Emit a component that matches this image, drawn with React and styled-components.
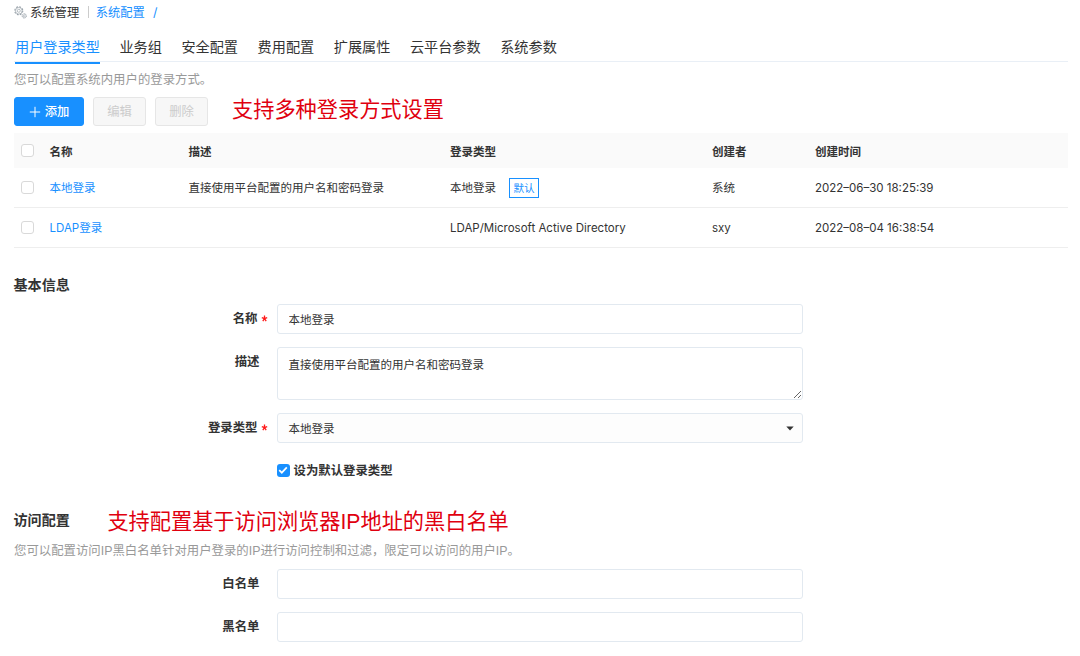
import { useState } from "react";
import styled, { createGlobalStyle } from "styled-components";

const tabs = ["用户登录类型", "业务组", "安全配置", "费用配置", "扩展属性", "云平台参数", "系统参数"];

const filas = [
  {
    id: 1,
    nombre: "本地登录",
    descripcion: "直接使用平台配置的用户名和密码登录",
    tipo: "本地登录",
    porDefecto: true,
    creador: "系统",
    fecha: "2022–06–30 18:25:39",
  },
  {
    id: 2,
    nombre: "LDAP登录",
    descripcion: "",
    tipo: "LDAP/Microsoft Active Directory",
    porDefecto: false,
    creador: "sxy",
    fecha: "2022–08–04 16:38:54",
  },
];

function IconoEngranajes() {
  return (
    <svg width="13" height="13" viewBox="0 0 13 13" fill="none" stroke="#9aa3ab">
      <circle cx="4.8" cy="4.8" r="4" strokeWidth="1.1" strokeDasharray="1.8 1.34" />
      <circle cx="4.8" cy="4.8" r="3.3" strokeWidth="0.7" />
      <circle cx="4.8" cy="4.8" r="1.5" strokeWidth="0.7" />
      <circle cx="10.3" cy="9.9" r="2.1" strokeWidth="1" strokeDasharray="1.2 0.45" />
      <circle cx="10.3" cy="9.9" r="1" strokeWidth="0.6" />
    </svg>
  );
}

function Check({ marcado }) {
  return (
    <Caja $marcado={marcado}>
      {marcado && (
        <svg width="12" height="12" viewBox="0 0 12 12" fill="none" stroke="#fff" strokeWidth="1.7">
          <path d="M2.2 6.1 L4.8 8.7 L9.8 3.4" />
        </svg>
      )}
    </Caja>
  );
}

export default function App() {
  const [activa, setActiva] = useState(0);
  return (
    <>
      <GlobalStyle />
      <Container>
        <Ruta>
          <IconoEngranajes />
          <span className="modulo">系统管理</span>
          <span className="separador" />
          <span className="actual">系统配置</span>
          <span className="barra">/</span>
        </Ruta>
        <Tabs>
          {tabs.map((t, i) => (
            <Tab key={t} $activa={i === activa} onClick={() => setActiva(i)}>
              {t}
            </Tab>
          ))}
        </Tabs>
        <Ayuda>您可以配置系统内用户的登录方式。</Ayuda>
        <Acciones>
          <BotonPrimario>
            <svg width="12" height="12" viewBox="0 0 12 12" stroke="#fff" strokeWidth="1">
              <path d="M6 0.8 V11.2 M0.8 6 H11.2" />
            </svg>
            添加
          </BotonPrimario>
          <Boton disabled>编辑</Boton>
          <Boton disabled>删除</Boton>
          <Nota $izq={15} $abajo={4}>支持多种登录方式设置</Nota>
        </Acciones>
        <Tabla>
          <Cabecera>
            <Check />
            <span>名称</span>
            <span>描述</span>
            <span>登录类型</span>
            <span>创建者</span>
            <span>创建时间</span>
          </Cabecera>
          {filas.map((f) => (
            <Fila key={f.id}>
              <Check />
              <Enlace>{f.nombre}</Enlace>
              <span>{f.descripcion}</span>
              <Tipo>
                {f.tipo}
                {f.porDefecto && <Etiqueta>默认</Etiqueta>}
              </Tipo>
              <span>{f.creador}</span>
              <span>{f.fecha}</span>
            </Fila>
          ))}
        </Tabla>

        <TituloSeccion $arriba={22}>基本信息</TituloSeccion>
        <Formulario $arriba={4}>
          <Campo>
            <Label>
              名称<Requerido />
            </Label>
            <Input defaultValue="本地登录" />
          </Campo>
          <Campo>
            <Label>描述</Label>
            <AreaTexto defaultValue="直接使用平台配置的用户名和密码登录" />
          </Campo>
          <Campo>
            <Label>
              登录类型<Requerido />
            </Label>
            <Selector>
              本地登录
              <svg width="8" height="5" viewBox="0 0 8 5" fill="#333">
                <path d="M0.3 0.4 H7.7 L4 4.5 Z" />
              </svg>
            </Selector>
          </Campo>
        </Formulario>
        <PorDefecto>
          <Check marcado />
          <span>设为默认登录类型</span>
        </PorDefecto>

        <Encabezado>
          <TituloSeccion $arriba={0}>访问配置</TituloSeccion>
          <Nota $izq={37.5} $abajo={0}>支持配置基于访问浏览器IP地址的黑白名单</Nota>
        </Encabezado>
        <Ayuda>您可以配置访问IP黑白名单针对用户登录的IP进行访问控制和过滤，限定可以访问的用户IP。</Ayuda>
        <Formulario $arriba={1}>
          <Campo>
            <Label>白名单</Label>
            <Input />
          </Campo>
          <Campo>
            <Label>黑名单</Label>
            <Input />
          </Campo>
        </Formulario>
      </Container>
    </>
  );
}

function Requerido() {
  return (
    <Asterisco>
      <svg width="7" height="7" viewBox="0 0 7 7" stroke="#ff1a1a" strokeWidth="1.3">
        <path d="M3.5 3.6 V0.6 M3.5 3.6 L0.8 2.7 M3.5 3.6 L6.2 2.7 M3.5 3.6 L1.8 6.1 M3.5 3.6 L5.2 6.1" />
      </svg>
    </Asterisco>
  );
}

const GlobalStyle = createGlobalStyle`
  * {
    box-sizing: border-box;
  }
  body {
    margin: 0;
    background: #fff;
    color: #333;
    font-family: Inter, "Noto Sans CJK SC", sans-serif;
    font-size: 11.5px;
    line-height: 16px;
  }
  input, textarea, button {
    font-family: inherit;
    color: inherit;
  }
`;
const Container = styled.div`
  width: 1080px;
  height: 656px;
  padding: 0 12px 0 14px;
  overflow: hidden;
`;
const Ruta = styled.div`
  display: flex;
  align-items: center;
  height: 24px;
  font-size: 12.3px;
  span {
    margin-top: 1px;
  }
  .modulo {
    margin-left: 3px;
  }
  .separador {
    width: 1px;
    height: 12px;
    margin: 0 7px 0 8.5px;
    background: #ccc;
  }
  .actual, .barra {
    color: #1890ff;
  }
  .barra {
    margin-left: 8px;
  }
`;
const Tabs = styled.div`
  display: flex;
  gap: 19.6px;
  height: 40px;
  padding: 8px 0 0 1px;
  box-shadow: inset 0 -2px #fff, inset 0 -3px #e9eff6;
`;
const Tab = styled.div`
  height: 32px;
  line-height: 29px;
  font-size: 14.15px;
  cursor: pointer;
  color: ${({ $activa }) => ($activa ? "#1890ff" : "#333")};
  border-bottom: 2px solid ${({ $activa }) => ($activa ? "#1890ff" : "transparent")};
`;
const Ayuda = styled.div`
  height: 33px;
  line-height: 33px;
  font-family: "Liberation Sans", "Noto Sans CJK SC", sans-serif;
  font-size: 12.4px;
  color: #999;
  white-space: nowrap;
`;
const Acciones = styled.div`
  display: flex;
  align-items: center;
  gap: 9px;
  height: 29px;
`;
const Boton = styled.button`
  display: flex;
  align-items: center;
  justify-content: center;
  width: 53px;
  height: 29px;
  padding: 1px 0 0;
  font-size: 12.3px;
  line-height: 16px;
  border-radius: 3px;
  border: 1px solid #e6e6e6;
  background: #f7f7f7;
  color: #ccc;
`;
const BotonPrimario = styled(Boton)`
  gap: 4px;
  width: 70px;
  border-color: #1890ff;
  background: #1890ff;
  color: #fff;
  font-weight: 500;
  svg {
    margin-top: -1px;
  }
`;
const Nota = styled.span`
  margin-left: ${({ $izq }) => $izq}px;
  padding-bottom: ${({ $abajo }) => $abajo}px;
  font-family: "Liberation Sans", "Noto Sans CJK SC", sans-serif;
  font-size: 21.2px;
  line-height: 28px;
  color: #e0000f;
  white-space: nowrap;
`;
const Tabla = styled.div`
  margin-top: 7px;
`;
const Fila = styled.div`
  display: grid;
  grid-template-columns: 28.5px 139px 261.5px 262px 103px 1fr;
  align-items: center;
  height: 40px;
  padding-left: 7px;
  border-bottom: 1px solid #eee;
`;
const Caja = styled.span`
  display: flex;
  width: 13px;
  height: 13px;
  border-radius: 3px;
  border: ${({ $marcado }) => ($marcado ? "none" : "1px solid #d9d9d9")};
  background: ${({ $marcado }) => ($marcado ? "#1890ff" : "#fff")};
`;
const Cabecera = styled(Fila)`
  height: 35px;
  padding-top: 2px;
  border-bottom: none;
  background: #fafafa;
  font-weight: 700;
  ${Caja} {
    margin-top: -2px;
  }
`;
const Enlace = styled.span`
  color: #1890ff;
`;
const Tipo = styled.span`
  display: flex;
  align-items: center;
`;
const Etiqueta = styled.span`
  width: 30px;
  height: 20px;
  margin-left: 13px;
  line-height: 19px;
  text-align: center;
  font-size: 10.6px;
  color: #1890ff;
  border: 1px solid #1890ff;
`;
const TituloSeccion = styled.div`
  margin-top: ${({ $arriba }) => $arriba}px;
  margin-left: -0.5px;
  height: 30px;
  line-height: 30px;
  font-size: 14.1px;
  font-weight: 700;
`;
const Formulario = styled.div`
  display: flex;
  flex-direction: column;
  gap: 13px;
  margin-top: ${({ $arriba }) => $arriba}px;
`;
const Campo = styled.div`
  display: grid;
  grid-template-columns: 245.5px 526px;
  column-gap: 17.5px;
`;
const Label = styled.label`
  display: flex;
  align-items: center;
  justify-content: flex-end;
  height: 29px;
  font-size: 12.4px;
  font-weight: 600;
`;
const Asterisco = styled.span`
  display: flex;
  margin: 0 -8px 1px 3px;
`;
const Input = styled.input`
  height: 30px;
  padding: 0 10.5px;
  font-size: 11.5px;
  border: 1px solid #e2e9f0;
  border-radius: 3px;
  outline: none;
`;
const AreaTexto = styled.textarea`
  height: 53px;
  padding: 8px 10.5px;
  font-size: 11.5px;
  line-height: 18px;
  border: 1px solid #e2e9f0;
  border-radius: 3px;
  outline: none;
  resize: vertical;
`;
const Selector = styled.div`
  display: flex;
  align-items: center;
  justify-content: space-between;
  height: 30px;
  padding: 1px 8px 0 10.5px;
  border: 1px solid #e2e9f0;
  border-radius: 3px;
  background: #fdfdfd;
`;
const PorDefecto = styled.div`
  display: flex;
  align-items: center;
  gap: 4px;
  height: 30px;
  margin: 12px 0 0 262.5px;
  font-size: 12.4px;
  font-weight: 600;
  span:last-child {
    padding-top: 1px;
  }
`;
const Encabezado = styled.div`
  display: flex;
  align-items: center;
  height: 30px;
  margin-top: 20px;
  ${Nota} {
    padding-top: 3px;
  }
`;
